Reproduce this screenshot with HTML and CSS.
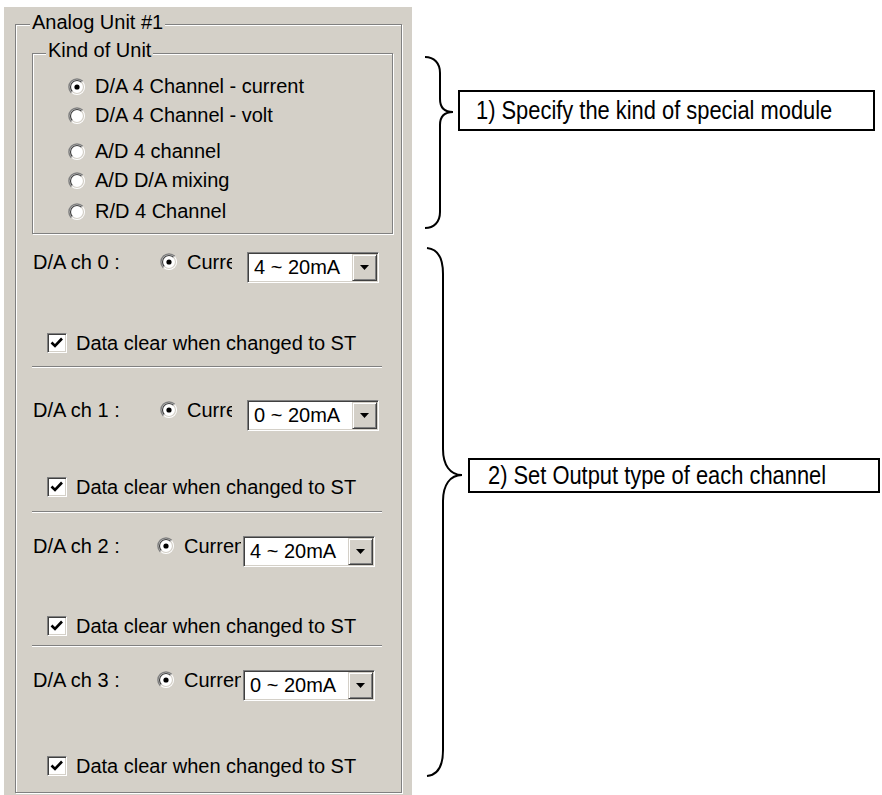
FILE: index.html
```html
<!DOCTYPE html>
<html lang="en">
<head>
    <meta charset="UTF-8">
    <title>Analog Unit Setup</title>
    <link rel="stylesheet" href="styles.css">
</head>
<body>
<div class="page">
    <div class="panel">
        <div class="group outer">
            <span class="legend">Analog Unit #1</span>

            <!-- Kind of unit -->
            <div class="group kind">
                <span class="legend">Kind of Unit</span>
                <ul class="units">
                    <li class="unit">
                        <svg class="radio" viewBox="0 0 18 18"><circle cx="9" cy="9" r="8" fill="#fff"/><path d="M3.3 14.7A8 8 0 0 1 14.7 3.3" stroke="#808080" stroke-width="1.5" fill="none"/><path d="M4.4 13.6A6.5 6.5 0 0 1 13.6 4.4" stroke="#404040" stroke-width="1.2" fill="none"/><path d="M13.6 4.4A6.5 6.5 0 0 1 4.4 13.6" stroke="#d4d0c8" stroke-width="1.2" fill="none"/><circle cx="9" cy="9" r="2.6" fill="#000"/></svg>
                        D/A 4 Channel - current
                    </li>
                    <li class="unit">
                        <svg class="radio" viewBox="0 0 18 18"><circle cx="9" cy="9" r="8" fill="#fff"/><path d="M3.3 14.7A8 8 0 0 1 14.7 3.3" stroke="#808080" stroke-width="1.5" fill="none"/><path d="M4.4 13.6A6.5 6.5 0 0 1 13.6 4.4" stroke="#404040" stroke-width="1.2" fill="none"/><path d="M13.6 4.4A6.5 6.5 0 0 1 4.4 13.6" stroke="#d4d0c8" stroke-width="1.2" fill="none"/></svg>
                        D/A 4 Channel - volt
                    </li>
                    <li class="unit">
                        <svg class="radio" viewBox="0 0 18 18"><circle cx="9" cy="9" r="8" fill="#fff"/><path d="M3.3 14.7A8 8 0 0 1 14.7 3.3" stroke="#808080" stroke-width="1.5" fill="none"/><path d="M4.4 13.6A6.5 6.5 0 0 1 13.6 4.4" stroke="#404040" stroke-width="1.2" fill="none"/><path d="M13.6 4.4A6.5 6.5 0 0 1 4.4 13.6" stroke="#d4d0c8" stroke-width="1.2" fill="none"/></svg>
                        A/D 4 channel
                    </li>
                    <li class="unit">
                        <svg class="radio" viewBox="0 0 18 18"><circle cx="9" cy="9" r="8" fill="#fff"/><path d="M3.3 14.7A8 8 0 0 1 14.7 3.3" stroke="#808080" stroke-width="1.5" fill="none"/><path d="M4.4 13.6A6.5 6.5 0 0 1 13.6 4.4" stroke="#404040" stroke-width="1.2" fill="none"/><path d="M13.6 4.4A6.5 6.5 0 0 1 4.4 13.6" stroke="#d4d0c8" stroke-width="1.2" fill="none"/></svg>
                        A/D D/A mixing
                    </li>
                    <li class="unit">
                        <svg class="radio" viewBox="0 0 18 18"><circle cx="9" cy="9" r="8" fill="#fff"/><path d="M3.3 14.7A8 8 0 0 1 14.7 3.3" stroke="#808080" stroke-width="1.5" fill="none"/><path d="M4.4 13.6A6.5 6.5 0 0 1 13.6 4.4" stroke="#404040" stroke-width="1.2" fill="none"/><path d="M13.6 4.4A6.5 6.5 0 0 1 4.4 13.6" stroke="#d4d0c8" stroke-width="1.2" fill="none"/></svg>
                        R/D 4 Channel
                    </li>
                </ul>
            </div>

            <!-- Channel 0 -->
            <section class="channel ch0">
                <div class="ch-row">
                    <span class="ch-name">D/A ch 0 :</span>
                    <svg class="radio" viewBox="0 0 18 18"><circle cx="9" cy="9" r="8" fill="#fff"/><path d="M3.3 14.7A8 8 0 0 1 14.7 3.3" stroke="#808080" stroke-width="1.5" fill="none"/><path d="M4.4 13.6A6.5 6.5 0 0 1 13.6 4.4" stroke="#404040" stroke-width="1.2" fill="none"/><path d="M13.6 4.4A6.5 6.5 0 0 1 4.4 13.6" stroke="#d4d0c8" stroke-width="1.2" fill="none"/><circle cx="9" cy="9" r="2.6" fill="#000"/></svg>
                    <span class="opt">Current</span>
                    <div class="combo">
                        <span class="combo-text">4 ~ 20mA</span>
                        <span class="combo-btn"><svg width="9" height="5" viewBox="0 0 9 5"><polygon points="0,0 9,0 4.5,5" fill="#000"/></svg></span>
                    </div>
                </div>
                <div class="check-row">
                    <span class="check"><svg width="18" height="18" viewBox="0 0 18 18"><path d="M3.5 8.5 L7 12 L14 4.5" stroke="#000" stroke-width="2.6" fill="none"/></svg></span>
                    Data clear when changed to ST
                </div>
                <hr class="sep">
            </section>

            <!-- Channel 1 -->
            <section class="channel ch1">
                <div class="ch-row">
                    <span class="ch-name">D/A ch 1 :</span>
                    <svg class="radio" viewBox="0 0 18 18"><circle cx="9" cy="9" r="8" fill="#fff"/><path d="M3.3 14.7A8 8 0 0 1 14.7 3.3" stroke="#808080" stroke-width="1.5" fill="none"/><path d="M4.4 13.6A6.5 6.5 0 0 1 13.6 4.4" stroke="#404040" stroke-width="1.2" fill="none"/><path d="M13.6 4.4A6.5 6.5 0 0 1 4.4 13.6" stroke="#d4d0c8" stroke-width="1.2" fill="none"/><circle cx="9" cy="9" r="2.6" fill="#000"/></svg>
                    <span class="opt">Current</span>
                    <div class="combo">
                        <span class="combo-text">0 ~ 20mA</span>
                        <span class="combo-btn"><svg width="9" height="5" viewBox="0 0 9 5"><polygon points="0,0 9,0 4.5,5" fill="#000"/></svg></span>
                    </div>
                </div>
                <div class="check-row">
                    <span class="check"><svg width="18" height="18" viewBox="0 0 18 18"><path d="M3.5 8.5 L7 12 L14 4.5" stroke="#000" stroke-width="2.6" fill="none"/></svg></span>
                    Data clear when changed to ST
                </div>
                <hr class="sep">
            </section>

            <!-- Channel 2 -->
            <section class="channel ch2 alt">
                <div class="ch-row">
                    <span class="ch-name">D/A ch 2 :</span>
                    <svg class="radio" viewBox="0 0 18 18"><circle cx="9" cy="9" r="8" fill="#fff"/><path d="M3.3 14.7A8 8 0 0 1 14.7 3.3" stroke="#808080" stroke-width="1.5" fill="none"/><path d="M4.4 13.6A6.5 6.5 0 0 1 13.6 4.4" stroke="#404040" stroke-width="1.2" fill="none"/><path d="M13.6 4.4A6.5 6.5 0 0 1 4.4 13.6" stroke="#d4d0c8" stroke-width="1.2" fill="none"/><circle cx="9" cy="9" r="2.6" fill="#000"/></svg>
                    <span class="opt">Current</span>
                    <div class="combo">
                        <span class="combo-text">4 ~ 20mA</span>
                        <span class="combo-btn"><svg width="9" height="5" viewBox="0 0 9 5"><polygon points="0,0 9,0 4.5,5" fill="#000"/></svg></span>
                    </div>
                </div>
                <div class="check-row">
                    <span class="check"><svg width="18" height="18" viewBox="0 0 18 18"><path d="M3.5 8.5 L7 12 L14 4.5" stroke="#000" stroke-width="2.6" fill="none"/></svg></span>
                    Data clear when changed to ST
                </div>
                <hr class="sep">
            </section>

            <!-- Channel 3 -->
            <section class="channel ch3 alt">
                <div class="ch-row">
                    <span class="ch-name">D/A ch 3 :</span>
                    <svg class="radio" viewBox="0 0 18 18"><circle cx="9" cy="9" r="8" fill="#fff"/><path d="M3.3 14.7A8 8 0 0 1 14.7 3.3" stroke="#808080" stroke-width="1.5" fill="none"/><path d="M4.4 13.6A6.5 6.5 0 0 1 13.6 4.4" stroke="#404040" stroke-width="1.2" fill="none"/><path d="M13.6 4.4A6.5 6.5 0 0 1 4.4 13.6" stroke="#d4d0c8" stroke-width="1.2" fill="none"/><circle cx="9" cy="9" r="2.6" fill="#000"/></svg>
                    <span class="opt">Current</span>
                    <div class="combo">
                        <span class="combo-text">0 ~ 20mA</span>
                        <span class="combo-btn"><svg width="9" height="5" viewBox="0 0 9 5"><polygon points="0,0 9,0 4.5,5" fill="#000"/></svg></span>
                    </div>
                </div>
                <div class="check-row">
                    <span class="check"><svg width="18" height="18" viewBox="0 0 18 18"><path d="M3.5 8.5 L7 12 L14 4.5" stroke="#000" stroke-width="2.6" fill="none"/></svg></span>
                    Data clear when changed to ST
                </div>
            </section>
        </div>
    </div>

    <!-- Callouts -->
    <div class="notes">
        <div class="note note-kind">
            <svg class="brace" width="30" height="176" viewBox="0 0 30 176"><path d="M1 2 C10 2 16 8 16 18 L16 44 C16 53 21 57 29 57 C21 57 16 61 16 70 L16 157 C16 167 10 173 1 173" stroke="#000" stroke-width="2" fill="none"/></svg>
            <div class="note-box"><span class="note-text">1) Specify the kind of special module</span></div>
        </div>
        <div class="note note-output">
            <svg class="brace" width="38" height="533" viewBox="0 0 38 533"><path d="M1 2 C12 3 17 12 17 28 L17 203 C17 219 24 229 36 229 C24 229 17 239 17 255 L17 504 C17 520 12 529 1 530" stroke="#000" stroke-width="2" fill="none"/></svg>
            <div class="note-box"><span class="note-text">2) Set Output type of each channel</span></div>
        </div>
    </div>
</div>
</body>
</html>
```

FILE: styles.css
```css
* {
    box-sizing: border-box;
}
body {
    margin: 0;
    background: #fff;
    color: #000;
    font-family: "Liberation Sans", Arial, sans-serif;
}
.page {
    display: flex;
    align-items: flex-start;
}

/* dialog panel */
.panel {
    margin: 7px 0 0 4px;
    width: 408px;
    background: #d4d0c8;
    padding: 17px 10px 2px 11px;
    font-size: 20px;
}
.group {
    position: relative;
    border: 1px solid #808080;
    box-shadow: inset 1px 1px 0 #fff, 1px 1px 0 #fff;
}
.legend {
    position: absolute;
    background: #d4d0c8;
    padding: 0 2px;
    line-height: 22px;
    white-space: nowrap;
}
.outer {
    padding: 28px 0 15px 0;
}
.outer > .legend {
    top: -14px;
    left: 14px;
}
.kind {
    margin-left: 16px;
    width: 361px;
    padding: 18px 0 7px 35px;
}
.kind > .legend {
    top: -15px;
    left: 13px;
}
.units {
    list-style: none;
    margin: 0;
    padding: 0;
}
.unit {
    display: flex;
    align-items: center;
    height: 29px;
    white-space: nowrap;
}
.unit:nth-child(3) {
    margin-top: 7px;
}
.unit:nth-child(5) {
    margin-top: 2px;
}
.radio {
    width: 18px;
    height: 18px;
    flex-shrink: 0;
}
.unit .radio {
    margin-right: 9px;
}

/* channel rows */
.ch-row {
    display: flex;
    align-items: center;
    height: 30px;
    margin-left: 17px;
    white-space: nowrap;
}
.ch-name {
    width: 127px;
    flex-shrink: 0;
}
.opt {
    width: 45px;
    margin-left: 9px;
    overflow: hidden;
    flex-shrink: 0;
}
.combo {
    display: flex;
    margin: 10px 0 0 15px;
    width: 132px;
    height: 31px;
    flex-shrink: 0;
    border: 1px solid;
    border-color: #808080 #fff #fff #808080;
    box-shadow: inset 1px 1px 0 #404040, inset -1px -1px 0 #d4d0c8;
    background: #fff;
    padding: 1px;
}
.combo-text {
    flex: 1;
    padding-left: 5px;
    line-height: 27px;
}
.combo-btn {
    width: 25px;
    display: flex;
    align-items: center;
    justify-content: center;
    background: #d4d0c8;
    border: 1px solid;
    border-color: #d4d0c8 #404040 #404040 #d4d0c8;
    box-shadow: inset 1px 1px 0 #fff, inset -1px -1px 0 #808080;
}
.alt .ch-name {
    width: 124px;
}
.alt .opt {
    width: 57px;
}
.alt .combo {
    margin-left: 2px;
}
.check-row {
    display: flex;
    align-items: center;
    height: 22px;
    margin-left: 31px;
    white-space: nowrap;
}
.check {
    width: 20px;
    height: 20px;
    margin-right: 9px;
    border: 1px solid;
    border-color: #808080 #fff #fff #808080;
    box-shadow: inset 1px 1px 0 #404040, inset -1px -1px 0 #d4d0c8;
    background: #fff;
}
.check svg {
    display: block;
}
.sep {
    border: 0;
    border-top: 1px solid #808080;
    border-bottom: 1px solid #fff;
    height: 2px;
    width: 350px;
    margin: 0 0 0 16px;
}

.ch0 .ch-row { margin-top: 13px; }
.ch0 .check-row { margin-top: 55px; }
.ch0 .sep { margin-top: 12px; }
.ch1 .ch-row { margin-top: 27px; }
.ch1 .check-row { margin-top: 51px; }
.ch1 .sep { margin-top: 13px; }
.ch2 .ch-row { margin-top: 18px; }
.ch2 .check-row { margin-top: 54px; }
.ch2 .sep { margin-top: 8px; }
.ch3 .ch-row { margin-top: 18px; }
.ch3 .check-row { margin-top: 60px; }

/* callouts */
.notes {
    margin-left: 12px;
}
.note {
    display: flex;
    align-items: flex-start;
}
.brace {
    flex-shrink: 0;
}
.note-box {
    display: flex;
    align-items: center;
    border: 2px solid #000;
    white-space: nowrap;
}
.note-text {
    display: inline-block;
    font-size: 25px;
    transform: scaleX(0.875);
    transform-origin: left center;
}
.note-kind {
    margin-top: 55px;
}
.note-kind .note-box {
    margin: 35px 0 0 4px;
    width: 417px;
    height: 41px;
    padding-left: 16px;
}
.note-output {
    margin: 15px 0 0 2px;
}
.note-output .note-box {
    margin: 212px 0 0 4px;
    width: 412px;
    height: 35px;
    padding-left: 18px;
}
```
